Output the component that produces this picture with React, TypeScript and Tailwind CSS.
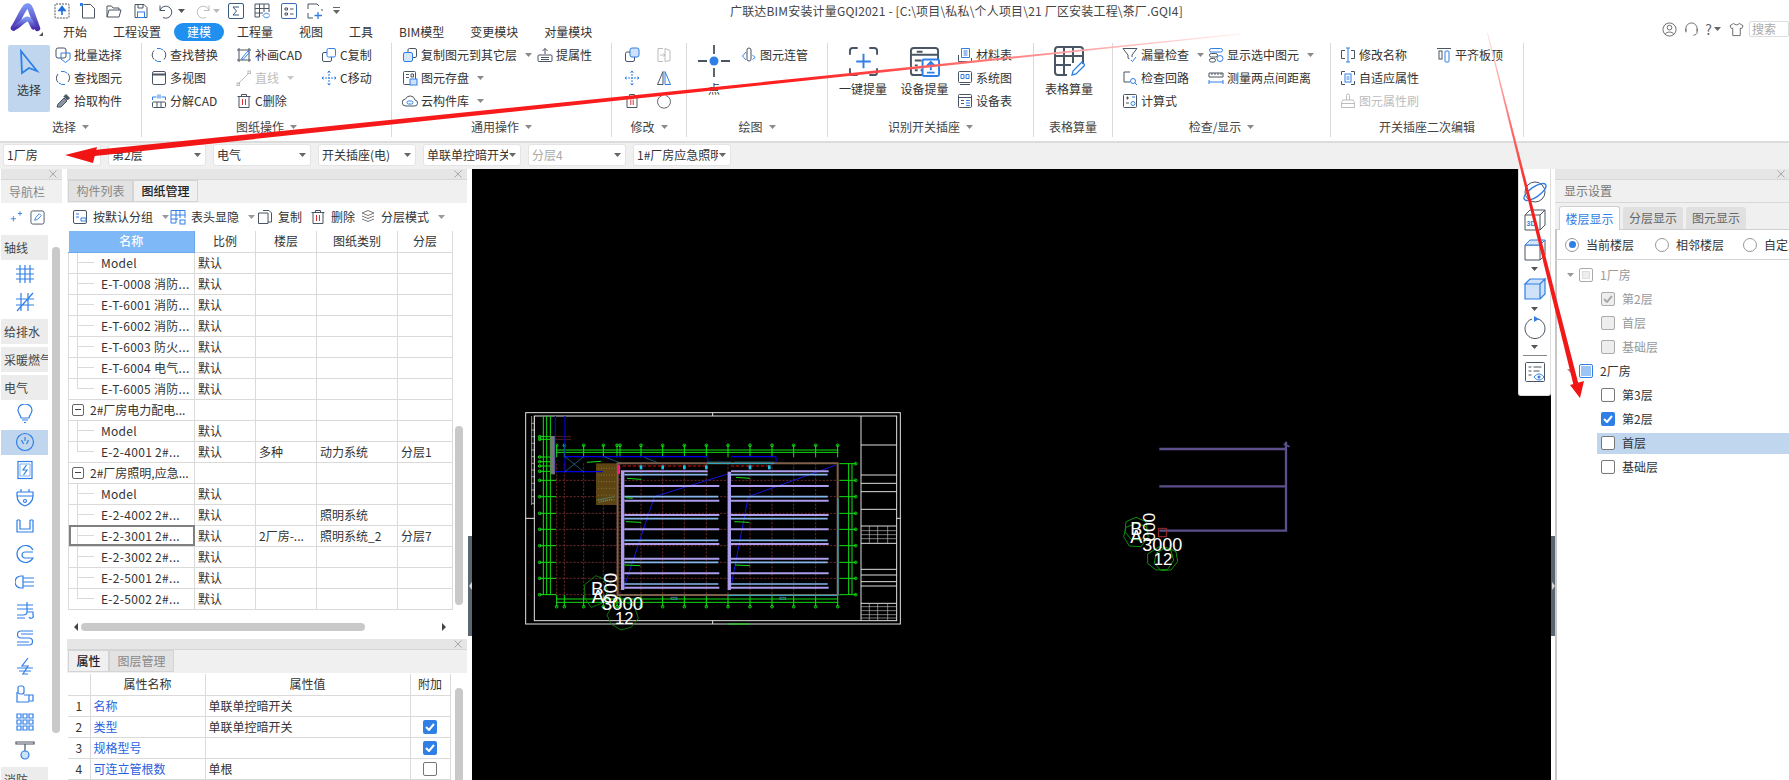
import type { ReactNode } from 'react';

const B = '#2f7fe6';
const D = '#4a5563';
const L = '#bcbcbc';

const I = ({ s = 16, v = 16, c = D, children }: { s?: number; v?: number; c?: string; children: ReactNode }) => (
  <svg width={s} height={s} viewBox={`0 0 ${v} ${v}`} fill="none" stroke={c} strokeWidth="1" className="shrink-0">
    {children}
  </svg>
);

const Caret = ({ c = '#777' }: { c?: string }) => (
  <svg width="7" height="4" viewBox="0 0 7 4" className="shrink-0">
    <path d="M0 0h7L3.5 4z" fill={c} />
  </svg>
);

const icons: Record<string, ReactNode> = {
  batch: <I><rect x="1" y="1" width="10" height="10" rx="2" /><path d="M6 6h9v6l-4.500 3.500L6 12z" stroke={B} /></I>,
  find: <I><path d="M3 4a6.500 6.500 0 0 0 0 8.500M13 12a6.500 6.500 0 0 0 0-8.500" /><path d="M6 1.500a7 7 0 0 1 6 1.500M10 14.500a7 7 0 0 1-6-1.500" stroke={B} /></I>,
  pick: <I><path d="M2 14l1-3 6-6 3 3-6 6z" fill="#8a94a3" /><path d="M9 3l4 4M11 1.500l3.500 3.500-2 2-3.500-3.500z" fill={D} /></I>,
  replace: <I><path d="M3 3.500a6.500 6.500 0 0 0 0 9M13 12.500a6.500 6.500 0 0 0 0-9" /><path d="M6 1.500a7 7 0 0 1 6 1.500M10 14.500a7 7 0 0 1-6-1.500" stroke={B} /></I>,
  multi: <I><rect x="1.500" y="1.500" width="13" height="13" rx="1.500" /><path d="M1.500 4.500h13" strokeWidth="2" /></I>,
  split: <I><path d="M1.500 7v-3h4M14.500 7v-3h-4" stroke={B} /><path d="M7 1.500v4M9 1.500v4" stroke={B} /><rect x="1.500" y="9" width="13" height="5.500" rx="1" /><path d="M6 9v5.500M10 9v5.500" /></I>,
  cad: <I><path d="M3 1v14M13 1v14M1 3h14M1 13h14" /><path d="M6 11l6-7 1.500 1.500L7.500 12 5.500 12.500z" stroke={B} /></I>,
  line: <I c={L}><path d="M2 14L13 3" /><rect x="12" y="1" width="2.500" height="2.500" /><rect x="1" y="13" width="2.500" height="2.500" /></I>,
  cdel: <I><path d="M1.500 3.500h13M5.500 3.500V1.500h5v2M3 3.500v11h10v-11" /><path d="M6.500 6v6M9.500 6v6" stroke="#e03131" /></I>,
  ccopy: <I><rect x="1.500" y="5.500" width="9" height="9" rx="1.500" /><rect x="6" y="1.500" width="8.500" height="8.500" rx="1.500" stroke={B} fill="#fff" /></I>,
  cmove: <I c={B}><path d="M8 1v14M1 8h14M8 1L6 3M8 1l2 2M8 15l-2-2M8 15l2-2M1 8l2-2M1 8l2 2M15 8l-2-2M15 8l-2 2" strokeDasharray="2 1" /></I>,
  copyFloor: <I><rect x="6" y="1.500" width="8.500" height="9" rx="1.500" /><rect x="1.500" y="5.500" width="9" height="9" rx="1.500" stroke={B} fill="#d5e6fb" /></I>,
  save: <I><rect x="1.500" y="1.500" width="12" height="13" rx="1" /><path d="M4 4.500h3M4 7.500h3M9 4h2.500v3H9z" /><rect x="8" y="9" width="7" height="6" fill="#cfe2fa" stroke={B} /></I>,
  cloud: <I><path d="M4 13a3.500 3.500 0 0 1-.500-7 5 5 0 0 1 9.500 1 3 3 0 0 1-1 6z" /><rect x="5" y="8" width="6" height="3" rx="1.500" stroke={B} /></I>,
  attr: <I><path d="M8 7V1.500M5.500 4L8 1.500 10.500 4" /><rect x="1" y="8" width="14" height="6.500" rx="1" /><path d="M4 10.500h8M4 12.500h8" /></I>,
  m1: <I><rect x="1.500" y="5" width="9" height="9.500" rx="1.500" /><rect x="6" y="1" width="9" height="9" rx="2" stroke={B} fill="#cfe2fa" /></I>,
  m2: <I c={L}><path d="M7 14.500H2v-13h5M9 1.500l5 2v10l-5 1zM4 8h5M7.500 6.500L9 8l-1.500 1.500" /></I>,
  m3: <I c={B}><path d="M8 1v14M1 8h14M8 1L6 3M8 1l2 2M8 15l-2-2M8 15l2-2M1 8l2-2M1 8l2 2M15 8l-2-2M15 8l-2 2" strokeDasharray="2 1" /></I>,
  m4: <I><path d="M7 1.500L1.500 14.500H7z" /><path d="M9 1.500l5.500 13H9z" stroke={B} /></I>,
  m5: <I><path d="M1.500 4h13M5.500 4V1.500h5V4M3 4v10.500h10V4" /><path d="M6.800 6.500v5.500M9.200 6.500v5.500" stroke="#e03131" /></I>,
  m6: <I c="#666"><path d="M6 2.500a6.500 6.500 0 1 0 4 0" /></I>,
  pipe: <I><rect x="6" y="1" width="4" height="13" rx="2" /><path d="M5 5L1.500 9 5 13" stroke={B} /><path d="M11.500 8.500c1 0 2 1 2.500 2l-2.500 2" stroke={B} /></I>,
  material: <I c={B}><path d="M4.500 1.500h8v9h-8zM6.500 4h4M6.500 6h4M6.500 8h4" /><path d="M1.500 8v6.500h13V11" stroke={D} /></I>,
  system: <I><rect x="1.500" y="1.500" width="13" height="11" rx="1" /><path d="M4 4.500h3v4H4zM9 4.500h3v4H9z" stroke={B} /><path d="M3 14.500h10" /></I>,
  device: <I><rect x="1.500" y="1.500" width="13" height="13" rx="1" /><path d="M1.500 4.500h13M4 7.500h3M4 10.500h3" /><path d="M9 7.500h4M9 10h4M9 12.500h4" stroke={B} /></I>,
  miss: <I><path d="M1 1.500h14L10 8v2" /><path d="M6 8v3l1.500 1" /><path d="M6 8L1 1.500" /><path d="M9 13l1.500 1.500L14 10" stroke={B} /></I>,
  loop: <I><path d="M5 2H2v10h6" /><path d="M5 2h3" /><circle cx="11" cy="11" r="2.500" stroke={B} /><path d="M13 13l2 2" stroke={B} /></I>,
  calc: <I><rect x="1.500" y="1.500" width="13" height="13" rx="1" /><path d="M4 5h3M5.500 3.500v3M4 10h3" /><circle cx="11" cy="10.500" r="2" stroke={B} /><path d="M10 4h3" stroke={B} /></I>,
  show: <I><rect x="1.500" y="1.500" width="13" height="3.500" rx="1.700" stroke={B} /><rect x="1.500" y="6.500" width="8" height="3.500" rx="1.700" /><rect x="1.500" y="11.500" width="6" height="3.500" rx="1.700" /><circle cx="12" cy="11.500" r="3" stroke={B} /></I>,
  measure: <I><path d="M1 3h14v4H1zM4 3v2M7 3v2M10 3v2M13 3v2" /><path d="M1 12h14M1 10v4M15 10v4" stroke={B} /></I>,
  rename: <I><path d="M5 3.500H1.500v8H5M11 3.500h3.500v8H11" /><path d="M8 1v14M6 1h4M6 15h4" stroke={B} /></I>,
  adapt: <I><path d="M1.500 5V1.500H5M11 1.500h3.500V5M14.500 11v3.500H11M5 14.500H1.500V11" /><rect x="5" y="4" width="6" height="8" stroke={B} /><path d="M6.500 7h3M6.500 9h3" stroke={B} /></I>,
  brush: <I c={L}><path d="M6.500 7V2.500a1.500 1.500 0 0 1 3 0V7M1.500 9.500L3 7h10l1.500 2.500v5h-13zM1.500 10.500h13" /></I>,
  top: <I><path d="M1 1.500h14" /><rect x="3" y="4" width="3" height="8" /><rect x="9" y="4" width="4" height="11" rx="1" stroke={B} /></I>,
};

const Arrow = () => <Caret c="#8a8a8a" />;

type ItemProps = { i: string; t: string; arrow?: boolean; off?: boolean };

const Item = ({ i, t, arrow, off }: ItemProps) => (
  <div className={`flex items-center gap-[3px] h-[23px] whitespace-nowrap ${off ? 'text-[#bdbdbd]' : 'text-[#333]'}`}>
    {icons[i]}
    <span>{t}</span>
    {arrow && <span className="ml-[5px]"><Caret c={off ? '#c8c8c8' : '#8a8a8a'} /></span>}
  </div>
);

const Col = ({ w, items }: { w: string; items: ItemProps[] }) => (
  <div className={`flex flex-col ${w}`}>
    {items.map((it) => (
      <Item key={it.t} {...it} />
    ))}
  </div>
);

const Group = ({ w, label, arrow = true, children }: { w: string; label: string; arrow?: boolean; children: ReactNode }) => (
  <div className={`${w} h-[94px] mt-[2px] border-r border-[#d9d9d9] flex flex-col shrink-0`}>
    <div className="h-[74px] flex">{children}</div>
    <div className="h-[20px] flex items-center justify-center gap-[6px] text-[#444]">
      <span>{label}</span>
      {arrow && <Arrow />}
    </div>
  </div>
);

const Big = ({ w, t, children }: { w: string; t: string; children: ReactNode }) => (
  <div className={`${w} flex flex-col items-center pt-px shrink-0`}>
    <div className="h-[34px] flex items-center">{children}</div>
    <div className="mt-[2px] whitespace-nowrap text-[#333]">{t}</div>
  </div>
);

const Ribbon = () => (
  <div className="h-[102px] bg-white border-b-2 border-[#dcdcdc] flex text-[12px] shrink-0">
    <Group w="w-[142px]" label="选择">
      <div className="ml-[8px] mt-[2px] w-[42px] h-[67px] bg-[#bfd6ee] rounded-[2px] flex flex-col items-center pt-[4px]">
        <svg width="22" height="30" viewBox="0 0 22 30" fill="none" stroke={B} strokeWidth="1.800"><path d="M3 2l16 20-8-3-7 5z" /></svg>
        <span className="mt-[2px] text-[#333]">选择</span>
      </div>
      <div className="ml-[5px]">
        <Col w="" items={[{ i: 'batch', t: '批量选择' }, { i: 'find', t: '查找图元' }, { i: 'pick', t: '拾取构件' }]} />
      </div>
    </Group>
    <Group w="w-[250px]" label="图纸操作">
      <div className="pl-[9px] flex">
        <Col w="w-[85px]" items={[{ i: 'replace', t: '查找替换' }, { i: 'multi', t: '多视图' }, { i: 'split', t: '分解CAD' }]} />
        <Col w="w-[85px]" items={[{ i: 'cad', t: '补画CAD' }, { i: 'line', t: '直线', arrow: true, off: true }, { i: 'cdel', t: 'C删除' }]} />
        <Col w="w-[70px]" items={[{ i: 'ccopy', t: 'C复制' }, { i: 'cmove', t: 'C移动' }]} />
      </div>
    </Group>
    <Group w="w-[220px]" label="通用操作">
      <div className="pl-[10px] flex">
        <Col w="w-[135px]" items={[{ i: 'copyFloor', t: '复制图元到其它层', arrow: true }, { i: 'save', t: '图元存盘', arrow: true }, { i: 'cloud', t: '云构件库', arrow: true }]} />
        <Col w="w-[70px]" items={[{ i: 'attr', t: '提属性' }]} />
      </div>
    </Group>
    <Group w="w-[75px]" label="修改">
      <div className="pl-[4px] grid grid-cols-[32px_32px] auto-rows-[23px] place-items-center">
        {['m1', 'm2', 'm3', 'm4', 'm5', 'm6'].map((k) => (
          <div key={k}>{icons[k]}</div>
        ))}
      </div>
    </Group>
    <Group w="w-[141px]" label="绘图">
      <Big w="w-[54px]" t="点">
        <svg width="32" height="32" viewBox="0 0 32 32" stroke={D} strokeWidth="1.800"><path d="M16 0v9M16 23v9M0 16h9M23 16h9" /><circle cx="16" cy="16" r="4.500" fill={B} stroke="none" /></svg>
      </Big>
      <Col w="" items={[{ i: 'pipe', t: '图元连管' }]} />
    </Group>
    <Group w="w-[206px]" label="识别开关插座">
      <div className="pl-[5px] flex">
        <Big w="w-[60px]" t="一键提量">
          <svg width="31" height="31" viewBox="0 0 32 32" fill="none" stroke={D} strokeWidth="2"><path d="M2 9V5a3 3 0 0 1 3-3h5M22 2h5a3 3 0 0 1 3 3v4M30 23v4a3 3 0 0 1-3 3h-5M10 30H5a3 3 0 0 1-3-3v-4" /><path d="M16 8v15M8.500 16h15" stroke={B} strokeWidth="2" /></svg>
        </Big>
        <Big w="w-[63px]" t="设备提量">
          <svg width="31" height="31" viewBox="0 0 32 32" fill="none" stroke={D} strokeWidth="2"><path d="M14 30H5a3 3 0 0 1-3-3V5a3 3 0 0 1 3-3h22a3 3 0 0 1 3 3v9M2 9h28M8 6h6M6 15h7M6 20h3M6 25h3M12 25h2" /><rect x="14" y="14" width="17" height="17" rx="1.500" fill="#fff" stroke={B} /><path d="M22.500 25v-8M18.500 20.500l4-4 4 4M18.500 27.500h8" stroke={B} /></svg>
        </Big>
        <div className="ml-[1px]">
          <Col w="" items={[{ i: 'material', t: '材料表' }, { i: 'system', t: '系统图' }, { i: 'device', t: '设备表' }]} />
        </div>
      </div>
    </Group>
    <Group w="w-[79px]" label="表格算量" arrow={false}>
      <Big w="w-[70px]" t="表格算量">
        <svg width="32" height="32" viewBox="0 0 32 32" fill="none" stroke={D} strokeWidth="2"><path d="M14 30H5a3 3 0 0 1-3-3V5a3 3 0 0 1 3-3h22a3 3 0 0 1 3 3v14M2 11h28M2 20h16M11 2v28M20 2v16" /><path d="M19 30l1-4 9-9 3 3-9 9z" stroke={B} strokeWidth="1.300" /></svg>
      </Big>
    </Group>
    <Group w="w-[218px]" label="检查/显示">
      <div className="pl-[9px] flex">
        <Col w="w-[86px]" items={[{ i: 'miss', t: '漏量检查', arrow: true }, { i: 'loop', t: '检查回路' }, { i: 'calc', t: '计算式' }]} />
        <Col w="w-[110px]" items={[{ i: 'show', t: '显示选中图元', arrow: true }, { i: 'measure', t: '测量两点间距离' }]} />
      </div>
    </Group>
    <Group w="w-[193px]" label="开关插座二次编辑" arrow={false}>
      <div className="pl-[9px] flex">
        <Col w="w-[96px]" items={[{ i: 'rename', t: '修改名称' }, { i: 'adapt', t: '自适应属性' }, { i: 'brush', t: '图元属性刷', off: true }]} />
        <Col w="w-[70px]" items={[{ i: 'top', t: '平齐板顶' }]} />
      </div>
    </Group>
  </div>
);

const Header = () => (
  <div className="h-[41px] bg-white flex text-[12px] shrink-0">
    <div className="w-[50px] shrink-0 pl-[10px] pt-[3px] relative">
      <svg width="32" height="30" viewBox="0 0 32 30" fill="none">
        <defs>
          <linearGradient id="logo" x1="0" y1="0" x2="0" y2="1">
            <stop offset="0" stopColor="#7a93f2" />
            <stop offset="1" stopColor="#4a2fae" />
          </linearGradient>
        </defs>
        <path d="M3.500 25C8 18 12 8 15.500 4c2-2 4-1 5 2l7 19.500" stroke="url(#logo)" strokeWidth="5.500" strokeLinecap="round" strokeLinejoin="round" />
        <path d="M3.500 25c5-1 10-9 14-9 3 0 4 5 6 8" stroke="url(#logo)" strokeWidth="5" strokeLinecap="round" />
      </svg>
      <span className="absolute left-[39px] top-[32px] w-0 h-0 border-l-[4px] border-l-transparent border-b-[4px] border-b-[#555]" />
    </div>
    <div className="flex-1 flex flex-col min-w-0">
      <div className="h-[21px] flex items-center text-[#444]">
        <div className="flex items-center w-[305px]">
          <div className="ml-[4px]"><I><rect x="1" y="1" width="14" height="14" rx="1" strokeDasharray="2 1" /><path d="M8 12V6M5 7.500L8 3.500l3 4z" stroke="#1f6fd8" fill="#1f6fd8" strokeWidth="1.600" /></I></div>
          <div className="ml-[10px]"><I><path d="M3.500 1.500h7l4 4v9.500H2.500V3" /><path d="M0 0h3v3H0z" fill={B} stroke="none" /></I></div>
          <div className="ml-[10px]"><I><path d="M1 14V3h4.500L7 5h6v2M1 14l2-7h12l-2 7z" /></I></div>
          <div className="ml-[11px]"><I><path d="M2 1.500h9l3 3v10H2z" /><path d="M5 1.500v3.500h5V1.500" /><rect x="4.500" y="9" width="7" height="5.500" stroke={B} /></I></div>
          <div className="ml-[9px]"><I><path d="M2 2.500v5h5M2 7.500a6 6 0 1 1 3 7" /></I></div>
          <div className="ml-[4px]"><Caret c="#555" /></div>
          <div className="ml-[10px]"><I c={L}><path d="M14 2.500v5H9M14 7.500a6 6 0 1 0-3 7" /></I></div>
          <div className="ml-[2px]"><Caret c="#bbb" /></div>
          <div className="ml-[8px]"><I c="#3a5a80"><rect x=".5" y=".5" width="15" height="15" rx="1.500" /><path d="M11 4H5l3.500 4L5 12h6" /></I></div>
          <div className="ml-[10px]"><I><path d="M1 14V1h14v8M1 5.500h14M1 10h8M5.500 1v13H1M10 1v8" /><path d="M9 12.500c2-3 5-3 7 0-2 3-5 3-7 0z" stroke={B} /></I></div>
          <div className="ml-[11px]"><I c="#3a6db5"><rect x=".5" y=".5" width="15" height="15" rx="1.500" /><path d="M4 5h2.500v2H4zM4 10h2.500v2H4zM9 6h3.500M9 11h3.500" stroke={D} /></I></div>
          <div className="ml-[10px]"><I><path d="M1 6V1h9l2 2M15 6v2M1 10v5h5" /><path d="M11 9v7M7.500 12.500h7.500" stroke={B} strokeWidth="1.300" /></I></div>
          <div className="ml-[10px]"><svg width="7" height="7" viewBox="0 0 7 7"><path d="M0 .5h7" stroke="#666" /><path d="M0 3h7L3.500 7z" fill="#666" /></svg></div>
        </div>
        <div className="ml-[375px] whitespace-nowrap tracking-[0.18px]">广联达BIM安装计量GQI2021 - [C:\项目\私私\个人项目\21 厂区安装工程\茶厂.GQI4]</div>
      </div>
      <div className="h-[20px] flex items-end">
        <div className="h-[18px] flex items-center">
          {['开始', '工程设置', '建模', '工程量', '视图', '工具', 'BIM模型', '变更模块', '对量模块'].map((t) => (
            <div key={t} className={`h-[18px] px-[13px] flex items-center ${t === '建模' ? 'bg-[#1f8ff0] text-white rounded-[9px]' : 'text-[#333]'}`}>
              {t}
            </div>
          ))}
        </div>
        <div className="ml-auto flex items-center h-[16px] self-start">
          <I s={15} c="#666"><circle cx="8" cy="8" r="7" /><circle cx="8" cy="6" r="2.500" /><path d="M3.500 13c1-3 8-3 9 0" /></I>
          <span className="ml-[7px]"><I s={15} c="#666"><path d="M2 10V7a6 6 0 0 1 12 0v3M2 7v4M14 7v4M14 11c0 2-2 3-4 3" /></I></span>
          <span className="ml-[6px] text-[#666] text-[14px] leading-none">?</span>
          <span className="ml-[2px]"><Caret c="#666" /></span>
          <span className="ml-[8px]"><I s={15} c="#666"><path d="M5 1.500L1 4l1.500 3L4 6.500v8h8v-8l1.500.5L15 4l-4-2.500c-1 2-5 2-6 0z" /></I></span>
          <div className="ml-[5px] w-[40px] h-[16px] border border-[#ddd] rounded-[2px] text-[#aaa] pl-[2px] flex items-center overflow-hidden">搜索</div>
        </div>
      </div>
    </div>
  </div>
);

const selectors = [
  { t: '1厂房', off: false, caret: false },
  { t: '第2层', off: false, caret: true },
  { t: '电气', off: false, caret: true },
  { t: '开关插座(电)', off: false, caret: true },
  { t: '单联单控暗开关', off: false, caret: true },
  { t: '分层4', off: true, caret: true },
  { t: '1#厂房应急照明', off: false, caret: true },
];

const SelectorBar = () => (
  <div className="h-[26px] bg-[#f0f0f0] flex gap-[7px] pl-[3px] pt-[1px] text-[12px] shrink-0">
    {selectors.map((s) => (
      <div key={s.t} className={`w-[98px] h-[22px] bg-white border border-[#e4e4e4] rounded-[3px] flex items-center pl-[3px] pr-[4px] ${s.off ? 'text-[#aaa]' : 'text-[#333]'}`}>
        <span className="flex-1 overflow-hidden whitespace-nowrap">{s.t}</span>
        {s.caret && <span className="ml-[1px]"><Caret c="#666" /></span>}
      </div>
    ))}
  </div>
);

const Close = () => (
  <svg width="8" height="8" viewBox="0 0 8 8" stroke="#a8a8a8" strokeWidth="1" className="shrink-0"><path d="M.5.5l7 7M7.500.5l-7 7" /></svg>
);

const Strip = () => (
  <div className="h-[11px] bg-[#e6e6e6] border-b border-[#d6d6d6] flex items-center justify-end pr-[5px] shrink-0"><Close /></div>
);

const navIcon = (d: ReactNode) => (
  <svg width="20" height="20" viewBox="0 0 20 20" fill="none" stroke={B} strokeWidth="1.200">{d}</svg>
);

type NavEntry = { h: string } | { d: ReactNode; active?: boolean };

const nav: NavEntry[] = [
  { h: '轴线' },
  { d: <path d="M1 5h18M1 10h18M1 15h18M5 1v18M10 1v18M15 1v18" /> },
  { d: <path d="M1 7h18M1 13h18M6 1v18M13 1v18M2 19L18 1" /> },
  { h: '给排水' },
  { h: '采暖燃气' },
  { h: '电气' },
  { d: <><path d="M6 14c0-3-3-4-3-8a7 6 0 0 1 14 0c0 4-3 5-3 8z" /><path d="M7 16h6M9 18.500h2" /></> },
  { d: <><circle cx="10" cy="10" r="8.500" /><path d="M10 5v4M6.500 8l2 4M13.500 8l-2 4" /></>, active: true },
  { d: <><rect x="3" y="1.500" width="14" height="17" /><path d="M11.500 5L8 10h4l-3.500 5" /><path d="M5 4h10v12H5z" strokeWidth=".6" /></> },
  { d: <><path d="M2 4h16v4M2 4v4c0 5 4 9 8 10 4-1 8-5 8-10M6 1v3M14 1v3M2 8h16" /><circle cx="10" cy="13" r="1.500" /></> },
  { d: <path d="M2 4v12h16V4M5 4v9h10V4M2 4h3M15 4h3" /> },
  { d: <path d="M18 6a8.500 8.500 0 1 0 0 8h-8a3 3 0 0 1 0-6h8" /> },
  { d: <path d="M8 4H6a5.500 5.500 0 0 0 0 12h2zM8 6h11M8 10h11M8 14h11" /> },
  { d: <path d="M2 5h16M2 9h16M12 2v10c0 2-2 3-4 3H2M12 12h6v3a2 2 0 0 1-4 2M2 18h8" /> },
  { d: <path d="M18 3H6a3 3 0 0 0 0 7h8a3 3 0 0 1 0 7H2M18 6H6M2 14h12" /> },
  { d: <path d="M2 12h16M4 15h12M7 18h6M13 2L7 10h6l-5 8" /> },
  { d: <><rect x="3" y="2" width="6" height="8" rx="2" /><path d="M2 8v10h12M9 11h9v6h-4v-6" /></> },
  { d: <path d="M2 2h4v4H2zM8 2h4v4H8zM14 2h4v4h-4zM2 8h4v4H2zM8 8h4v4H8zM14 8h4v4h-4zM2 14h4v4H2zM8 14h4v4H8zM14 14h4v4h-4z" /> },
  { d: <><path d="M1 2h18v2H1zM10 4v8" stroke={D} /><circle cx="10" cy="15" r="4" fill="#cfe2fa" /></> },
  { h: '消防' },
];

const Nav = () => (
  <div className="w-[61px] ml-[1px] flex flex-col shrink-0 text-[12px] text-[#444]">
    <Strip />
    <div className="h-[23px] bg-[#f0f0f0] text-[#888] pl-[8px] flex items-center shrink-0">导航栏</div>
    <div className="h-[26px] mt-[1px] bg-white rounded-[3px] flex items-center gap-[7px] pl-[8px] shrink-0">
      <I s={14} c={B}><path d="M2 10h6M5 7v6M10 4h5M12.500 1.500v5" /></I>
      <I s={15}><rect x="1" y="1" width="14" height="14" rx="2" /><path d="M5 11l1-3 4-4 2 2-4 4z" stroke={B} /></I>
    </div>
    <div className="flex-1 mt-px bg-white flex pt-[4px] overflow-hidden">
      <div className="w-[47px] flex flex-col">
        {nav.map((n, idx) =>
          'h' in n ? (
            <div key={n.h} className={`h-[25px] bg-[#ececec] pl-[3px] flex items-center whitespace-nowrap overflow-hidden shrink-0 ${n.h === '给排水' || n.h === '采暖燃气' || n.h === '消防' ? 'mb-[3px]' : ''} ${n.h === '给排水' || n.h === '消防' ? 'mt-[3px]' : ''}`}>
              {n.h}
            </div>
          ) : (
            <div key={idx} className="h-[28px] flex items-center justify-center shrink-0">
              <div className={`w-full h-[25px] flex items-center justify-center ${n.active ? 'bg-[#bfd6ee]' : ''}`}>{navIcon(n.d)}</div>
            </div>
          )
        )}
      </div>
      <div className="ml-[4px] mt-[12px] w-[8px] h-[486px] bg-[#c9c9c9] rounded-[4px]" />
    </div>
  </div>
);

const PanelTab = ({ t, on, w }: { t: string; on: boolean; w: string }) => (
  <div className={`${w} h-[22px] flex items-center justify-center border border-[#d4d4d4] ${on ? 'bg-[#f0f0f0] text-[#222] font-medium' : 'bg-[#e2e2e2] text-[#888]'}`}>{t}</div>
);

const ToolItem = ({ icon, t, arrow, w }: { icon: ReactNode; t: string; arrow?: boolean; w: string }) => (
  <div className={`${w} flex items-center gap-[5px] whitespace-nowrap`}>
    {icon}
    <span>{t}</span>
    {arrow && <span className="ml-[4px]"><Caret c="#999" /></span>}
  </div>
);

type DrawRow = { kind: 'leaf' | 'last' | 'parent'; n: string; s?: string; f?: string; c?: string; l?: string; sel?: boolean };

const rows: DrawRow[] = [
  { kind: 'leaf', n: 'Model', s: '默认' },
  { kind: 'leaf', n: 'E-T-0008 消防...', s: '默认' },
  { kind: 'leaf', n: 'E-T-6001 消防...', s: '默认' },
  { kind: 'leaf', n: 'E-T-6002 消防...', s: '默认' },
  { kind: 'leaf', n: 'E-T-6003 防火...', s: '默认' },
  { kind: 'leaf', n: 'E-T-6004 电气...', s: '默认' },
  { kind: 'last', n: 'E-T-6005 消防...', s: '默认' },
  { kind: 'parent', n: '2#厂房电力配电...' },
  { kind: 'leaf', n: 'Model', s: '默认' },
  { kind: 'last', n: 'E-2-4001 2#...', s: '默认', f: '多种', c: '动力系统', l: '分层1' },
  { kind: 'parent', n: '2#厂房照明,应急...' },
  { kind: 'leaf', n: 'Model', s: '默认' },
  { kind: 'leaf', n: 'E-2-4002 2#...', s: '默认', c: '照明系统' },
  { kind: 'leaf', n: 'E-2-3001 2#...', s: '默认', f: '2厂房-...', c: '照明系统_2', l: '分层7', sel: true },
  { kind: 'leaf', n: 'E-2-3002 2#...', s: '默认' },
  { kind: 'leaf', n: 'E-2-5001 2#...', s: '默认' },
  { kind: 'last', n: 'E-2-5002 2#...', s: '默认' },
];

const cell = 'border-b border-r border-[#dadada] px-[3px] overflow-hidden whitespace-nowrap';

const DrawingPanel = () => (
  <div className="h-[466px] flex flex-col shrink-0">
    <Strip />
    <div className="h-[23px] bg-[#f0f0f0] flex pl-[1px] shrink-0">
      <PanelTab t="构件列表" on={false} w="w-[65px]" />
      <PanelTab t="图纸管理" on w="w-[65px]" />
    </div>
    <div className="h-[27px] bg-white rounded-[3px] flex items-center pl-[5px] text-[12px] text-[#333] shrink-0">
      <ToolItem w="w-[98px]" t="按默认分组" arrow icon={<I><rect x="1.500" y="1.500" width="13" height="13" rx="1.500" /><path d="M4 5h3M4 8h3M9 9h5v3H9z" stroke={B} /></I>} />
      <ToolItem w="w-[87px]" t="表头显隐" arrow icon={<I c={B}><path d="M1 14V1.500h14V9M1 6h14M1 10h7M6 1.500V14H1M10 1.500V9" /><rect x="10" y="11" width="5" height="4" /></I>} />
      <ToolItem w="w-[53px]" t="复制" icon={<I><path d="M6 1.500h6l2.500 2.500v9H11M1.500 4h9.500v10.500H1.500z" /></I>} />
      <ToolItem w="w-[50px]" t="删除" icon={<I><path d="M1.500 3.500h13M5.500 3.500V1.500h5v2M3 3.500v11h10v-11" /><path d="M6.500 6v6M9.500 6v6" stroke="#e03131" /></I>} />
      <ToolItem w="w-[90px]" t="分层模式" arrow icon={<I c="#777"><path d="M8 1.500l6 2.500-6 2.500L2 4zM2 7l6 2.500L14 7M2 10l6 2.500 6-2.500" /></I>} />
    </div>
    <div className="flex-1 bg-white pt-px pl-px pr-[3px] relative text-[12px] text-[#333]">
      <table className="table-fixed border-collapse w-[384px]">
        <colgroup>
          <col className="w-[126px]" />
          <col className="w-[61px]" />
          <col className="w-[61px]" />
          <col className="w-[81px]" />
          <col className="w-[55px]" />
        </colgroup>
        <thead>
          <tr className="h-[21px]">
            <th className="bg-[#7eb8f7] text-white font-medium border-b border-r border-[#6aa8ea]">名称</th>
            {['比例', '楼层', '图纸类别', '分层'].map((h) => (
              <th key={h} className={`${cell} font-normal text-center`}>{h}</th>
            ))}
          </tr>
        </thead>
        <tbody>
          {rows.map((r) => (
            <tr key={r.n + r.kind + (r.c ?? '')} className="h-[21px]">
              <td className={`p-0 ${r.sel ? 'outline-2 -outline-offset-2 outline-[#808080]' : ''} border-b border-r border-l border-[#dadada]`}>
                {r.kind === 'parent' ? (
                  <div className="flex items-center h-[20px] whitespace-nowrap">
                    <span className="ml-[3px] w-[12px] h-[12px] border border-[#666] rounded-[2px] flex items-center justify-center"><span className="w-[6px] h-px bg-[#444]" /></span>
                    <span className="ml-[6px]">{r.n}</span>
                  </div>
                ) : (
                  <div className="flex h-[20px] whitespace-nowrap">
                    <span className={`ml-[8px] w-[17px] border-l border-[#dadada] ${r.kind === 'last' ? 'h-[10px]' : 'h-[20px]'}`}>
                      <span className="block h-[10px] border-b border-[#dadada]" />
                    </span>
                    <span className="ml-[7px] leading-[20px] tracking-[0.3px]">{r.n}</span>
                  </div>
                )}
              </td>
              <td className={cell}>{r.s}</td>
              <td className={cell}>{r.f}</td>
              <td className={cell}>{r.c}</td>
              <td className={cell}>{r.l}</td>
            </tr>
          ))}
        </tbody>
      </table>
      <div className="absolute right-[4px] top-[196px] w-[8px] h-[179px] bg-[#c9c9c9] rounded-[4px]" />
      <div className="absolute left-[7px] bottom-[4px] right-[21px] flex items-center">
        <span className="w-0 h-0 border-y-[4px] border-y-transparent border-r-[4px] border-r-[#444]" />
        <span className="ml-[3px] w-[284px] h-[8px] bg-[#c9c9c9] rounded-[4px]" />
        <span className="ml-auto w-0 h-0 border-y-[4px] border-y-transparent border-l-[4px] border-l-[#444]" />
      </div>
    </div>
  </div>
);

const Check = ({ on }: { on?: boolean }) =>
  on ? (
    <span className="w-[14px] h-[14px] rounded-[2px] bg-[#2f7fe6] flex items-center justify-center">
      <svg width="10" height="8" viewBox="0 0 10 8" fill="none" stroke="#fff" strokeWidth="2"><path d="M1 4l3 3 5-6" /></svg>
    </span>
  ) : (
    <span className="w-[14px] h-[14px] rounded-[2px] border border-[#777] bg-white" />
  );

const props = [
  { n: '名称', v: '单联单控暗开关' },
  { n: '类型', v: '单联单控暗开关', on: true },
  { n: '规格型号', v: '', on: true },
  { n: '可连立管根数', v: '单根', on: false },
];

const PropPanel = () => (
  <div className="flex-1 mt-[4px] flex flex-col min-h-0">
    <Strip />
    <div className="h-[23px] bg-[#f0f0f0] flex pl-[1px] shrink-0">
      <PanelTab t="属性" on w="w-[41px]" />
      <PanelTab t="图层管理" on={false} w="w-[65px]" />
    </div>
    <div className="flex-1 bg-white pt-px pl-px relative text-[12px] text-[#333] overflow-hidden">
      <table className="table-fixed border-collapse w-[382px]">
        <colgroup>
          <col className="w-[22px]" />
          <col className="w-[115px]" />
          <col className="w-[205px]" />
          <col className="w-[40px]" />
        </colgroup>
        <thead>
          <tr className="h-[21px]">
            {['', '属性名称', '属性值', '附加'].map((h) => (
              <th key={h} className={`${cell} font-normal text-center`}>{h}</th>
            ))}
          </tr>
        </thead>
        <tbody>
          {props.map((p, idx) => (
            <tr key={p.n} className="h-[21px]">
              <td className={`${cell} text-center`}>{idx + 1}</td>
              <td className={`${cell} text-[#2a5fe0]`}>{p.n}</td>
              <td className={cell}>{p.v}</td>
              <td className={`${cell} py-0`}>
                <div className="flex justify-center">{p.on !== undefined && <Check on={p.on} />}</div>
              </td>
            </tr>
          ))}
        </tbody>
      </table>
      <div className="absolute right-[4px] top-[15px] w-[8px] h-[200px] bg-[#c9c9c9] rounded-[4px]" />
    </div>
  </div>
);

const xs = [137, 160, 218, 277, 318, 327, 390, 455, 520, 586, 651, 717, 783, 848, 914, 980];
const ys = [241, 290, 340, 388, 437, 487, 535, 584];
const leftOnly = [110, 118, 171, 185, 198, 214];
const purple = [258, 302, 345, 388, 432, 476, 520, 563];
const bluish = [290, 356, 421, 487, 552];
const titleLines = [135, 225, 250, 275, 328, 378, 430, 508, 525, 545, 558, 610];
const G = '#10e010';

const Sheet = () => (
  <svg width="400" height="240" viewBox="0 0 1200 720" className="absolute left-[39px] top-[231px]" fill="none">
    <rect x="44" y="38" width="1124" height="634" stroke="#e4e4e4" strokeWidth="3" />
    <rect x="70" y="48" width="1087" height="614" stroke="#e4e4e4" strokeWidth="3" />
    <path d="M44 355h26M1157 355h11M605 38v10M605 662v10" stroke="#e4e4e4" strokeWidth="3" />
    <path d="M1050 48v614" stroke="#ddd" strokeWidth="3" />
    {titleLines.map((y) => <path key={y} d={`M1050 ${y}h107`} stroke="#ddd" strokeWidth="3" />)}
    {[392, 404, 416, 620, 632, 644, 654].map((y) => <path key={y} d={`M1050 ${y}h107`} stroke="#bbb" strokeWidth="2" />)}
    {[1075, 1100, 1130].map((x) => <path key={x} d={`M${x} 378v52M${x} 610v50`} stroke="#bbb" strokeWidth="2" />)}
    <path d="M62 48v267M70 48v267" stroke="#ddd" strokeWidth="2" />
    {[70, 90, 110, 130, 150, 170, 190, 210, 230, 250, 270, 290, 310].map((y) => <path key={y} d={`M62 ${y}h8`} stroke="#ddd" strokeWidth="2" />)}

    {xs.map((x) => <path key={x} d={`M${x} 190V585`} stroke="#7a3030" strokeWidth="2.500" strokeDasharray="7 4" />)}
    {ys.map((y) => <path key={y} d={`M110 ${y}H980`} stroke="#7a3030" strokeWidth="2.500" strokeDasharray="7 4" />)}
    <path d="M130 110h50M130 118h50" stroke="#7a3030" strokeWidth="2" />

    <path d="M97 48V585M107 48V585M118 48V585M1013 190V585M1023 190V585" stroke={G} strokeWidth="3" />
    <path d="M135 150H982M135 157H982M135 597H982M135 607H982" stroke={G} strokeWidth="3" />
    {xs.map((x) => (
      <g key={x} stroke={G} strokeWidth="3">
        <path d={`M${x} 135V172M${x} 585V620`} />
        <circle cx={x} cy="136" r="4" />
        <circle cx={x} cy="620" r="4" />
      </g>
    ))}
    {[...leftOnly, ...ys].map((y) => (
      <g key={y} stroke={G} strokeWidth="3">
        <path d={`M85 ${y}h50`} />
        <circle cx="86" cy={y} r="4" />
      </g>
    ))}
    {[191, ...ys].map((y) => (
      <g key={y} stroke={G} strokeWidth="3">
        <path d={`M985 ${y}h50`} />
        <circle cx="1034" cy={y} r="4" />
      </g>
    ))}

    <rect x="118" y="108" width="14" height="115" fill="#777" />
    <rect x="255" y="190" width="65" height="125" fill="#5c4512" />
    {[205, 225, 245, 265, 285, 300].map((y) => <path key={y} d={`M262 ${y}h52`} stroke="#9a8a40" strokeWidth="3" strokeDasharray="2 6" />)}
    <path d="M260 300l50-10M265 306l40-8" stroke="#46b4c8" strokeWidth="3" strokeDasharray="3 3" />
    <path d="M133 48V215M162 48V215M133 215H275M162 170H590M660 170H795M795 170V190M590 170V190" stroke="#0000e6" strokeWidth="3.500" />
    <path d="M162 170L218 215M218 170L162 215M280 170L330 190M400 172L440 188M590 186H660M670 186H790" stroke="#1f7fa8" strokeWidth="2" />

    <path d="M320 190H980V585H320z" stroke="#7e5f4c" strokeWidth="6" />
    <path d="M981 295V585M650 586H980M590 190H660M660 190H790" stroke="#20b4cc" strokeWidth="3" />
    <path d="M324 195V222" stroke="#ff1a8c" strokeWidth="6" />
    <path d="M335 198H590M660 198H780" stroke="#e01010" strokeWidth="3" strokeDasharray="10 5" />
    {[390, 455, 520, 586, 717, 775].map((x) => <rect key={x} x={x - 4} y="196" width="8" height="12" fill="#18c4e8" />)}

    <path d="M340 560L430 290L650 222M660 560L712 290L975 195" stroke="#1414e0" strokeWidth="3" />
    {purple.map((y) => <path key={y} d={`M340 ${y}H625M660 ${y}H953`} stroke="#ab9cec" strokeWidth="6" />)}
    {bluish.map((y) => <path key={y} d={`M340 ${y}H622M660 ${y}H950`} stroke="#85b6ea" strokeWidth="5" />)}
    <path d="M330 214H590M660 214H953" stroke="#ab9cec" strokeWidth="6" />
    <path d="M340 224H590M660 224H950" stroke="#85b6ea" strokeWidth="5" />
    <path d="M335 215V570M655 215V570" stroke="#ab9cec" strokeWidth="10" />
    <path d="M348 235l42 3M675 232l42 3M345 365l45 2M670 365l45 2M340 495l48 2M672 495l45 2M345 293l20 2M228 187l42-3" stroke="#18e018" strokeWidth="3" />
    <path d="M480 592h18v6h-18zM806 592h18v6h-18z" stroke="#5a9ae0" strokeWidth="2" />
    <path d="M650 672h65" stroke={G} strokeWidth="3" />

    <g stroke="#0e8e0e" strokeWidth="2.500">
      <polygon points="255,527 280,538 290,575 272,610 240,622 222,595 220,555" />
      <polygon points="335,603 370,618 382,655 360,682 330,690 300,672 288,645 305,615" />
    </g>
    <g fill="#fff" fontFamily="'Liberation Sans', sans-serif" fontSize="56">
      <text x="240" y="585">B</text>
      <text x="242" y="610">A</text>
      <text x="272" y="630">3000</text>
      <text x="312" y="672" fontSize="50">12</text>
      <text x="0" y="0" fontSize="56" transform="translate(278 518) rotate(90)">000</text>
    </g>
  </svg>
);

const Stub = () => (
  <svg width="240" height="170" viewBox="0 0 720 510" className="absolute left-[629px] top-[251px]" fill="none">
    <path d="M175 87H555M175 199H555M175 332H555M555 65V335" stroke="#5d4f8c" strokeWidth="7" />
    <path d="M548 72l18 8" stroke="#5d4f8c" strokeWidth="5" />
    <rect x="172" y="325" width="24" height="25" stroke="#a02c2c" strokeWidth="3" />
    <g stroke="#0e8e0e" strokeWidth="3">
      <polygon points="105,292 135,305 140,335 120,360 90,358 72,335 75,305" />
      <polygon points="105,310 135,320 142,350 120,380 85,378 68,350 75,322" />
      <polygon points="175,380 210,392 218,420 200,448 165,450 140,430 140,402" />
      <polygon points="195,382 225,395 230,425 210,450 180,452 160,430 165,400" />
    </g>
    <g fill="#fff" fontFamily="'Liberation Sans', sans-serif" fontSize="54">
      <text x="88" y="345">B</text>
      <text x="88" y="368">A</text>
      <text x="124" y="394">3000</text>
      <text x="158" y="436" fontSize="50">12</text>
      <text x="0" y="0" fontSize="52" transform="translate(127 278) rotate(90)">000</text>
    </g>
  </svg>
);

const viewTool: ReactNode[] = [
  <svg key="a" width="24" height="24" viewBox="0 0 24 24" fill="none" stroke={D}><circle cx="12" cy="12" r="10" /><ellipse cx="12" cy="12" rx="13" ry="5" stroke={B} strokeWidth="1.400" transform="rotate(-35 12 12)" /></svg>,
  <svg key="b" width="24" height="24" viewBox="0 0 24 24" fill="none" stroke={D}><path d="M2 7l5-5h15v15l-5 5H2zM2 7h15v15M17 7l5-5" /><text x="3.500" y="18" fontSize="7" fontWeight="700" fill={B} stroke="none" fontFamily="'Liberation Sans', sans-serif">3D</text></svg>,
  <svg key="c" width="24" height="24" viewBox="0 0 24 24" fill="none" stroke={D}><path d="M2 7h15v15H2zM17 22l5-5V2L17 7" /><path d="M2 7l5-5h15l-5 5z" stroke={B} fill="#d5e6fb" /></svg>,
  <Caret key="c1" c="#555" />,
  <svg key="d" width="24" height="24" viewBox="0 0 24 24" fill="#cfe2fa" stroke={B} strokeWidth="1.200"><path d="M2 7h15v15H2zM17 22l5-5V2L17 7M2 7l5-5h15l-5 5z" /></svg>,
  <Caret key="c2" c="#555" />,
  <svg key="e" width="24" height="24" viewBox="0 0 24 24" fill="none" stroke={D}><path d="M9 3a10 10 0 1 0 6 0" /><path d="M11 0l5 3-5 3z" fill={B} stroke="none" /></svg>,
  <Caret key="c3" c="#555" />,
];

const ViewBar = () => (
  <div className="absolute right-0 top-0 w-[33px] h-[227px] bg-white rounded-b-[3px] border-x border-b border-[#ddd] flex flex-col items-center">
    <div className="h-[10px]" />
    <div className="h-[26px] flex items-center">{viewTool[0]}</div>
    <div className="h-[30px] flex items-center">{viewTool[1]}</div>
    <div className="h-[29px] flex items-center">{viewTool[2]}</div>
    <div className="h-[10px] flex items-center">{viewTool[3]}</div>
    <div className="h-[30px] flex items-center">{viewTool[4]}</div>
    <div className="h-[9px] flex items-center">{viewTool[5]}</div>
    <div className="h-[29px] flex items-center">{viewTool[6]}</div>
    <div className="h-[10px] flex items-center">{viewTool[7]}</div>
    <div className="w-[24px] h-px bg-[#888] mt-[3px]" />
    <div className="mt-[5px]">
      <svg width="22" height="22" viewBox="0 0 22 22" fill="none" stroke={D}><rect x="1.500" y="1.500" width="19" height="19" rx="1" /><path d="M4.500 6h3M9.500 6h8M4.500 10h3M9.500 10h6M4.500 14h3" /><path d="M10 16c3-4 7-4 10 0-3 4-7 4-10 0z" stroke={B} fill="#fff" /><circle cx="15" cy="16" r="1.500" fill={B} stroke="none" /></svg>
    </div>
  </div>
);

const Handle = ({ dir }: { dir: 'l' | 'r' }) => (
  <div className="w-[4px] h-[100px] bg-[#5c6670] flex items-center justify-center shrink-0">
    <span className={`w-0 h-0 border-y-[4px] border-y-transparent ${dir === 'l' ? 'border-r-[3px] border-r-[#d8d8d8]' : 'border-l-[3px] border-l-[#d8d8d8]'}`} />
  </div>
);

const Box = ({ kind }: { kind: 'off' | 'part' | 'mute' | 'offOn' }) => {
  if (kind === 'part') return <span className="w-[14px] h-[14px] rounded-[2px] border border-[#2f7fe6] bg-white p-[1px]"><span className="block w-full h-full bg-[#9cc4f5]" /></span>;
  if (kind === 'off') return <span className="w-[14px] h-[14px] rounded-[2px] border border-[#aaa] bg-[#eee]" />;
  if (kind === 'mute') return <span className="w-[14px] h-[14px] rounded-[2px] border border-[#aaa] p-[2px]"><span className="block w-full h-full bg-[#eee] border border-[#ddd]" /></span>;
  return (
    <span className="w-[14px] h-[14px] rounded-[2px] border border-[#aaa] bg-[#eee] flex items-center justify-center">
      <svg width="10" height="8" viewBox="0 0 10 8" fill="none" stroke="#aaa" strokeWidth="2"><path d="M1 4l3 3 5-6" /></svg>
    </span>
  );
};

const Radio = ({ on, t, w }: { on?: boolean; t: string; w: string }) => (
  <div className={`${w} flex items-center gap-[7px] whitespace-nowrap shrink-0`}>
    <span className="w-[14px] h-[14px] rounded-full border border-[#999] bg-white flex items-center justify-center">
      {on && <span className="w-[7px] h-[7px] rounded-full bg-[#2f7fe6]" />}
    </span>
    <span>{t}</span>
  </div>
);

type FloorRow = { t: string; parent?: boolean; box: ReactNode; mute?: boolean; sel?: boolean };

const floors: FloorRow[] = [
  { t: '1厂房', parent: true, box: <Box kind="mute" />, mute: true },
  { t: '第2层', box: <Box kind="offOn" />, mute: true },
  { t: '首层', box: <Box kind="off" />, mute: true },
  { t: '基础层', box: <Box kind="off" />, mute: true },
  { t: '2厂房', parent: true, box: <Box kind="part" /> },
  { t: '第3层', box: <Check /> },
  { t: '第2层', box: <Check on /> },
  { t: '首层', box: <Check />, sel: true },
  { t: '基础层', box: <Check /> },
];

const DisplayPanel = () => (
  <div className="w-[235px] shrink-0 flex flex-col text-[12px] overflow-hidden">
    <Strip />
    <div className="h-[23px] bg-[#f0f0f0] text-[#777] pl-[9px] flex items-center border-b border-[#d8d8d8] shrink-0">显示设置</div>
    <div className="h-[27px] bg-[#f0f0f0] flex items-end gap-[3px] pl-[4px] border-b border-[#cfcfcf] shrink-0">
      <div className="w-[61px] h-[24px] bg-white border-x border-t border-[#cfcfcf] rounded-t-[3px] text-[#2f7fe6] flex items-center justify-center relative top-px">楼层显示</div>
      <div className="w-[60px] h-[22px] bg-[#e0e0e0] rounded-t-[3px] text-[#666] flex items-center justify-center">分层显示</div>
      <div className="w-[60px] h-[22px] bg-[#e0e0e0] rounded-t-[3px] text-[#666] flex items-center justify-center">图元显示</div>
    </div>
    <div className="h-[30px] bg-white flex items-center pl-[8px] border-b border-[#d4d4d4] border-l-2 border-l-[#c8c8c8] text-[#333] shrink-0">
      <Radio on t="当前楼层" w="w-[90px]" />
      <Radio t="相邻楼层" w="w-[88px]" />
      <Radio t="自定义楼层" w="w-[90px]" />
    </div>
    <div className="flex-1 bg-white border-l-2 border-[#c8c8c8] pt-[3px]">
      {floors.map((f) => (
        <div key={f.t + (f.parent ? 'p' : '') + (f.mute ? 'm' : '')} className={`h-[24px] flex items-center ${f.mute ? 'text-[#999]' : 'text-[#333]'}`}>
          {f.parent ? (
            <>
              <span className="ml-[10px] mr-[5px]"><Caret c="#999" /></span>
              <span className="flex">{f.box}</span>
              <span className="ml-[7px]">{f.t}</span>
            </>
          ) : (
            <div className={`ml-[40px] flex-1 h-[21px] flex items-center pl-[4px] ${f.sel ? 'bg-[#bfd6ee]' : ''}`}>
              <span className="flex">{f.box}</span>
              <span className="ml-[7px]">{f.t}</span>
            </div>
          )}
        </div>
      ))}
    </div>
  </div>
);

const Annotations = () => (
  <svg width="1789" height="780" viewBox="0 0 1789 780" className="absolute inset-0 pointer-events-none">
    <defs>
      <linearGradient id="arrowA" gradientUnits="userSpaceOnUse" x1="65" y1="0" x2="1240" y2="0">
        <stop offset="0" stopColor="#f01414" />
        <stop offset="0.62" stopColor="#ff2020" />
        <stop offset="0.85" stopColor="#ff9c9c" />
        <stop offset="1" stopColor="#ffeeee" />
      </linearGradient>
      <linearGradient id="arrowB" gradientUnits="userSpaceOnUse" x1="0" y1="33" x2="0" y2="398">
        <stop offset="0" stopColor="#ffe4e4" />
        <stop offset="0.25" stopColor="#ff7070" />
        <stop offset="0.45" stopColor="#f52020" />
        <stop offset="1" stopColor="#f01414" />
      </linearGradient>
    </defs>
    <polygon points="1240,33.500 1240,34.500 90,156.500 89,150.500" fill="url(#arrowA)" />
    <polygon points="65,155 97,147 93,163" fill="#f01414" />
    <polygon points="1487,33 1488,33 1579,386 1574,387" fill="url(#arrowB)" />
    <polygon points="1580,398 1570,385 1584,381" fill="#f01414" />
  </svg>
);

export default function App() {
  return (
    <div className="relative w-[1789px] h-[780px] overflow-hidden flex flex-col bg-white font-['Noto_Sans_CJK_SC',sans-serif]">
      <Header />
      <Ribbon />
      <SelectorBar />
      <div className="flex-1 flex min-h-0 bg-white text-[12px]">
        <Nav />
        <div className="w-[400px] ml-[5px] flex flex-col shrink-0">
          <DrawingPanel />
          <PropPanel />
        </div>
        <div className="w-[4px] ml-px pt-[367px] shrink-0"><Handle dir="l" /></div>
        <div className="w-[1079px] bg-black relative shrink-0 overflow-hidden">
          <Sheet />
          <Stub />
          <ViewBar />
        </div>
        <div className="w-[4px] pt-[367px] shrink-0"><Handle dir="r" /></div>
        <DisplayPanel />
      </div>
      <Annotations />
    </div>
  );
}
